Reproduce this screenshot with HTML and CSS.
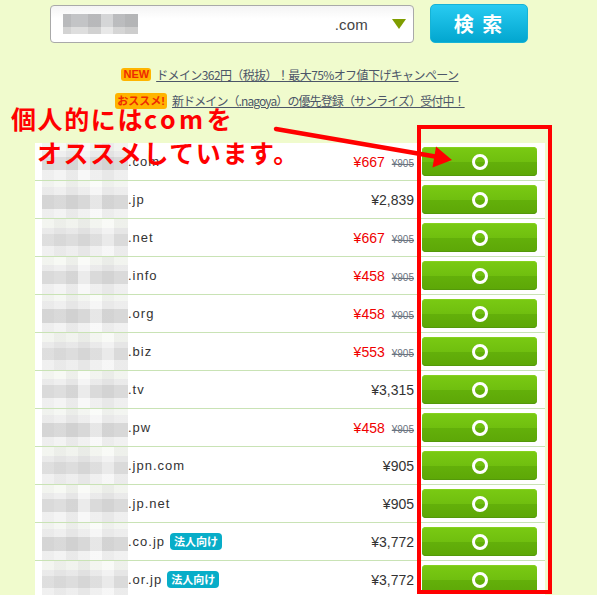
FILE: index.html
```html
<!DOCTYPE html>
<html lang="ja">
<head>
<meta charset="utf-8">
<title>ドメイン検索</title>
<link rel="stylesheet" href="styles.css">
</head>
<body>
<div class="page">
  <div class="search">
    <div class="input">
      <div class="blur-text"></div>
      <span class="tld-select">.com</span>
      <span class="caret"></span>
    </div>
    <button class="search-btn">検 索</button>
  </div>

  <div class="banners">
    <p><span class="badge badge-new">NEW</span><a class="banner-link">ドメイン362円（税抜）！最大75%オフ値下げキャンペーン</a></p>
    <p><span class="badge badge-rec">おススメ!</span><a class="banner-link tight">新ドメイン（.nagoya）の優先登録（サンライズ）受付中！</a></p>
  </div>

  <div class="list">
    <div class="row"><div class="blur b1"></div><span class="tld">.com</span><span class="price"><span class="sale">¥667</span><s class="old">¥905</s></span><span class="ok"><i class="ring"></i></span></div>
    <div class="row"><div class="blur b2"></div><span class="tld">.jp</span><span class="price">¥2,839</span><span class="ok"><i class="ring"></i></span></div>
    <div class="row"><div class="blur b3"></div><span class="tld">.net</span><span class="price"><span class="sale">¥667</span><s class="old">¥905</s></span><span class="ok"><i class="ring"></i></span></div>
    <div class="row"><div class="blur b1"></div><span class="tld">.info</span><span class="price"><span class="sale">¥458</span><s class="old">¥905</s></span><span class="ok"><i class="ring"></i></span></div>
    <div class="row"><div class="blur b2"></div><span class="tld">.org</span><span class="price"><span class="sale">¥458</span><s class="old">¥905</s></span><span class="ok"><i class="ring"></i></span></div>
    <div class="row"><div class="blur b3"></div><span class="tld">.biz</span><span class="price"><span class="sale">¥553</span><s class="old">¥905</s></span><span class="ok"><i class="ring"></i></span></div>
    <div class="row"><div class="blur b1"></div><span class="tld">.tv</span><span class="price">¥3,315</span><span class="ok"><i class="ring"></i></span></div>
    <div class="row"><div class="blur b2"></div><span class="tld">.pw</span><span class="price"><span class="sale">¥458</span><s class="old">¥905</s></span><span class="ok"><i class="ring"></i></span></div>
    <div class="row"><div class="blur b3"></div><span class="tld">.jpn.com</span><span class="price">¥905</span><span class="ok"><i class="ring"></i></span></div>
    <div class="row"><div class="blur b1"></div><span class="tld">.jp.net</span><span class="price">¥905</span><span class="ok"><i class="ring"></i></span></div>
    <div class="row"><div class="blur b2"></div><span class="tld">.co.jp</span><span class="corp">法人向け</span><span class="price">¥3,772</span><span class="ok"><i class="ring"></i></span></div>
    <div class="row"><div class="blur b3"></div><span class="tld">.or.jp</span><span class="corp">法人向け</span><span class="price">¥3,772</span><span class="ok"><i class="ring"></i></span></div>
  </div>

  <div class="annot">
    <div class="annot-line">個人的には<span class="annot-latin">com</span>を</div>
    <div class="annot-line annot-indent">オススメしています。</div>
  </div>

  <svg class="arrow" width="597" height="595" viewBox="0 0 597 595">
    <line x1="276" y1="129" x2="438" y2="157" stroke="#ff0000" stroke-width="4.5" stroke-linecap="round"/>
    <polygon points="452,160 436,146.5 432.5,167.5" fill="#ff0000"/>
  </svg>

  <div class="redbox"></div>
</div>
</body>
</html>
```

FILE: styles.css
```css
* { box-sizing: border-box; }

html, body {
  margin: 0;
  padding: 0;
  background: #f0fbcd;
}

body {
  font-family: "Liberation Sans", Arial, "Noto Sans CJK JP", sans-serif;
  color: #333;
  overflow: hidden;
}

.page {
  position: relative;
  width: 597px;
  height: 595px;
}

/* search bar */
.search {
  display: flex;
  align-items: flex-start;
  gap: 16px;
  padding: 4px 0 0 50px;
}

.input {
  display: flex;
  align-items: center;
  width: 364px;
  height: 38px;
  margin-top: 1px;
  padding: 0 7px 0 12px;
  background: linear-gradient(#f4f4f4, #ffffff 35%);
  border: 1px solid #a9a9a9;
  border-radius: 4px;
}

.blur-text {
  width: 75px;
  height: 20px;
  background:
    linear-gradient(to right, rgba(0,0,0,0.05) 0 8px, rgba(0,0,0,0) 8px 25px, rgba(0,0,0,0.06) 25px 38px, rgba(255,255,255,0.3) 38px 50px, rgba(0,0,0,0.04) 50px 62px, rgba(0,0,0,0.08) 62px 75px),
    linear-gradient(#c3c4c6 0 13px, #dedede 13px 20px);
}

.tld-select {
  margin-left: auto;
  margin-right: 24px;
  font-size: 15px;
  color: #444;
  letter-spacing: 0.2px;
}

.caret {
  width: 0;
  height: 0;
  border-left: 7px solid transparent;
  border-right: 7px solid transparent;
  border-top: 10px solid #7f9d00;
}

.search-btn {
  width: 98px;
  height: 39px;
  padding: 0;
  border: 1px solid #16b3d6;
  border-radius: 5px;
  background: linear-gradient(#28cbf1, #02a6cf);
  color: #fff;
  font-family: "Noto Sans CJK JP", sans-serif;
  font-weight: 700;
  font-size: 20px;
  letter-spacing: 2px;
  line-height: 37px;
}

/* banners */
.banners {
  width: 510px;
  margin: 19px 0 0 35px;
  text-align: center;
}

.banners p {
  margin: 0;
  height: 26px;
  line-height: 26px;
  font-family: "Noto Sans CJK JP", sans-serif;
  font-size: 12px;
}

.badge {
  display: inline-block;
  vertical-align: middle;
  margin-right: 5px;
  padding: 0 2px;
  background: #ffb400;
  border-radius: 3px;
  color: #ee2a00;
  font-family: "Liberation Sans", "Noto Sans CJK JP", sans-serif;
  font-weight: 700;
  font-size: 11px;
  line-height: 13px;
  position: relative;
  top: -2px;
}

.badge-rec {
  line-height: 16px;
  padding: 0 2px;
  font-size: 11px;
}

.banner-link {
  color: #4c5668;
  text-decoration: underline;
  letter-spacing: -0.6px;
}

.tight {
  letter-spacing: -0.9px;
}

/* list */
.list {
  width: 510px;
  margin: 29px 0 0 35px;
  background: #fff;
}

.row {
  display: flex;
  align-items: center;
  height: 38px;
  padding: 0 8px 0 7px;
  border-bottom: 1px solid #c9e3b5;
}

.blur {
  align-self: flex-start;
  width: 86px;
  height: 37px;
  flex: none;
}

.b1 {
  background:
    linear-gradient(to right, rgba(0,0,0,0.02) 0 12px, rgba(0,0,0,0) 12px 24px, rgba(0,0,0,0.04) 24px 36px, rgba(255,255,255,0.4) 36px 48px, rgba(0,0,0,0.02) 48px 60px, rgba(0,0,0,0.05) 60px 72px, rgba(0,0,0,0.02) 72px 86px),
    linear-gradient(#f7f9f4 0 8px, #efefef 8px 14px, #dedede 14px 27px, #f4f4f4 27px 37px);
}

.b2 {
  background:
    linear-gradient(to right, rgba(0,0,0,0.03) 0 12px, rgba(0,0,0,0.01) 12px 24px, rgba(0,0,0,0.05) 24px 36px, rgba(0,0,0,0.02) 36px 48px, rgba(255,255,255,0.3) 48px 60px, rgba(0,0,0,0.04) 60px 72px, rgba(0,0,0,0.02) 72px 86px),
    linear-gradient(#f8faf6 0 6px, #f2f2f2 6px 14px, #dcdcdc 14px 28px, #f6f6f6 28px 37px);
}

.b3 {
  background:
    linear-gradient(to right, rgba(0,0,0,0.01) 0 12px, rgba(0,0,0,0.04) 12px 24px, rgba(0,0,0,0.02) 24px 36px, rgba(0,0,0,0.05) 36px 48px, rgba(0,0,0,0.01) 48px 60px, rgba(255,255,255,0.3) 60px 72px, rgba(0,0,0,0.03) 72px 86px),
    linear-gradient(#f6f8f3 0 9px, #ededed 9px 15px, #e1e1e1 15px 27px, #f3f3f3 27px 37px);
}

.tld {
  font-size: 13px;
  letter-spacing: 1px;
  color: #333;
}

.corp {
  margin-left: 5px;
  padding: 0 4px;
  height: 17px;
  line-height: 17px;
  background: #08adc8;
  border-radius: 4px;
  color: #fff;
  font-family: "Noto Sans CJK JP", sans-serif;
  font-weight: 700;
  font-size: 11px;
}

.price {
  flex: 1;
  text-align: right;
  padding-right: 8px;
  font-size: 14px;
  color: #333;
}

.sale {
  color: #f00000;
}

.old {
  margin-left: 7px;
  font-size: 10px;
  color: #6b7480;
}

.ok {
  display: flex;
  align-items: center;
  justify-content: center;
  width: 115px;
  height: 29px;
  border-radius: 4px;
  background: linear-gradient(#7aca13 0, #70bf0f 50%, #63b00a 52%, #5da707 100%);
  box-shadow: inset 0 -1px 0 #54990a, inset 0 1px 0 #86d21e;
}

.ring {
  display: block;
  width: 16px;
  height: 16px;
  border: 3px solid #fff;
  border-radius: 50%;
  margin-left: 1px;
}

/* annotation overlays */
.annot {
  position: absolute;
  left: 11px;
  top: 101px;
  color: #ff0000;
  font-family: "Noto Sans CJK JP", sans-serif;
  font-weight: 700;
  font-size: 25px;
  line-height: 34px;
  letter-spacing: 1.6px;
}

.annot-latin {
  letter-spacing: 3.5px;
}

.annot-indent {
  margin-left: 26px;
}

.arrow {
  position: absolute;
  left: 0;
  top: 0;
}

.redbox {
  position: absolute;
  left: 417px;
  top: 125px;
  width: 135px;
  height: 469px;
  border: 4px solid #ff0000;
}
```
